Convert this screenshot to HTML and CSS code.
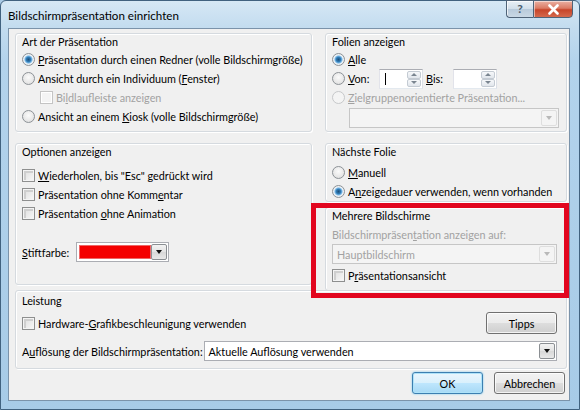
FILE: index.html
```html
<!DOCTYPE html>
<html lang="de">
<head>
<meta charset="utf-8">
<title>Bildschirmpräsentation einrichten</title>
<link rel="stylesheet" href="styles.css">
</head>
<body>
<div class="window">
  <div class="titlebar">
    <div class="title">Bildschirmpräsentation einrichten</div>
    <div class="caption">
      <div class="cbtn help">?</div>
      <div class="cbtn close"><svg width="13" height="11" viewBox="0 0 13 11"><path d="M2.5 1.5 L10.5 9.5 M10.5 1.5 L2.5 9.5" stroke="#fff" stroke-width="2.6" stroke-linecap="round"/></svg></div>
    </div>
  </div>
  <div class="client">
    <div class="cols">
      <div class="group g1">
        <div class="glabel">Art der Präsentation</div>
        <div class="row"><i class="radio on"></i><span><u>P</u>räsentation durch einen Redner (volle Bildschirmgröße)</span></div>
        <div class="row"><i class="radio"></i><span>Ansicht durch ein Individuum (<u>F</u>enster)</span></div>
        <div class="row sub dis"><i class="check"></i><span>Bi<u>l</u>dlaufleiste anzeigen</span></div>
        <div class="row"><i class="radio"></i><span>Ansicht an einem <u>K</u>iosk (volle Bildschirmgröße)</span></div>
      </div>
      <div class="group g2">
        <div class="glabel">Folien anzeigen</div>
        <div class="row"><i class="radio on"></i><span><u>A</u>lle</span></div>
        <div class="row von">
          <i class="radio"></i><span class="lbl-von"><u>V</u>on:</span>
          <div class="spin"><span class="caret"></span><div class="spinbtns"><b class="up"></b><b class="down"></b></div></div>
          <span class="lbl-bis"><u>B</u>is:</span>
          <div class="spin"><div class="spinbtns"><b class="up"></b><b class="down"></b></div></div>
        </div>
        <div class="row dis"><i class="radio"></i><span><u>Z</u>ielgruppenorientierte Präsentation...</span></div>
        <div class="combo dis ziel"><span class="val"></span><b class="abtn"><i class="tri"></i></b></div>
      </div>

      <div class="group g3">
        <div class="glabel">Optionen anzeigen</div>
        <div class="checks">
          <div class="row"><i class="check"></i><span><u>W</u>iederholen, bis "Esc" gedrückt wird</span></div>
          <div class="row"><i class="check"></i><span>Präsentation ohne Komm<u>e</u>ntar</span></div>
          <div class="row"><i class="check"></i><span>Präsentation <u>o</u>hne Animation</span></div>
        </div>
        <div class="row pen"><span><u>S</u>tiftfarbe:</span>
          <div class="combo color"><span class="swatch"></span><b class="abtn"><i class="tri"></i></b></div>
        </div>
      </div>
      <div class="rightcol">
        <div class="group g4">
          <div class="glabel">Nächste Folie</div>
          <div class="row"><i class="radio"></i><span><u>M</u>anuell</span></div>
          <div class="row"><i class="radio on"></i><span>A<u>n</u>zeigedauer verwenden, wenn vorhanden</span></div>
        </div>
        <div class="group g5">
          <div class="glabel">Mehrere Bildschirme</div>
          <div class="row dis plain">Bildschirmpräsen<u>t</u>ation anzeigen auf:</div>
          <div class="combo dis mon"><span class="val">Hauptbildschirm</span><b class="abtn"><i class="tri"></i></b></div>
          <div class="row"><i class="check"></i><span>P<u>r</u>äsentationsansicht</span></div>
        </div>
      </div>
    </div>

    <div class="group g6">
      <div class="glabel">Leistung</div>
      <div class="row hw"><i class="check"></i><span>Hardware-<u>G</u>rafikbeschleunigung verwenden</span><button class="btn tipps">Tipps</button></div>
      <div class="row res"><span>A<u>u</u>flösung der Bildschirmpräsentation:</span>
        <div class="combo resc"><span class="val">Aktuelle Auflösung verwenden</span><b class="abtn"><i class="tri"></i></b></div>
      </div>
    </div>

    <div class="buttons">
      <button class="btn def">OK</button>
      <button class="btn">Abbrechen</button>
    </div>

    <div class="annot"></div>
  </div>
</div>
</body>
</html>
```

FILE: styles.css
```css
* { box-sizing: border-box; }
html, body { margin: 0; padding: 0; }
body {
  width: 580px; height: 410px; overflow: hidden;
  font-family: "Lato", "Open Sans", sans-serif;
  font-size: 10.8px; color: #000;
  background: #aacbe6;
}
u { text-decoration: underline; text-underline-offset: 1px; }
i, b { display: block; font-style: normal; }

.window {
  width: 580px; height: 410px;
  border: 1px solid #41627f;
  border-radius: 6px 6px 0 0;
  background: linear-gradient(180deg, #d6e8f5 0, #c3dcef 26px, #b3d3ec 60px, #a7cbe7 100%);
  display: flex; flex-direction: column;
}
.titlebar {
  height: 27px; flex: none;
  display: flex; justify-content: space-between; align-items: flex-start;
  padding-left: 7px;
}
.title { line-height: 27px; font-size: 11.6px; color: #000; padding-top: 1px; }
.caption { display: flex; margin-right: 6px; margin-top: -1px; }
.cbtn {
  height: 18px; border: 1px solid #4f6378;
  display: flex; align-items: center; justify-content: center;
}
.help {
  width: 27px; border-right: none; border-radius: 0 0 0 4px;
  background: linear-gradient(180deg, #e9f0f6 0, #d2dfea 48%, #b8cadb 52%, #c9d8e5 100%);
  color: #4a5b6c; font-size: 12px; font-weight: bold; line-height: 1;
  box-shadow: inset 1px 1px 0 rgba(255,255,255,.7);
}
.close {
  width: 40px; border-radius: 0 0 4px 0;
  background: linear-gradient(180deg, #eab1a3 0, #db7b64 45%, #c7452a 55%, #d5694d 100%);
  box-shadow: inset 1px 1px 0 rgba(255,255,255,.5);
}

.client {
  flex: 1; margin: 0 9px 8px 7px;
  border: 1px solid #7b93aa;
  background: #f0f0f0;
  padding: 4px 2px 0 6px;
  display: flex; flex-direction: column;
  position: relative;
}
.cols {
  display: grid;
  grid-template-columns: 297px 242px;
  column-gap: 13px; row-gap: 11px;
}
.group {
  border: 1px solid #d5dadf;
  border-radius: 3px;
  box-shadow: inset 1px 1px 0 #fff, 1px 1px 0 #fff;
  padding: 1px 6px 0 6px;
}
.glabel { line-height: 14px; height: 14px; }
.row { display: flex; align-items: center; height: 19px; white-space: nowrap; }
.row > span { margin-left: 3px; }
.row.sub { padding-left: 18px; }
.dis { color: #a2a2a2; }

.radio {
  width: 13px; height: 13px; border-radius: 50%; flex: none;
  border: 1px solid #8d9297;
  background: radial-gradient(circle at 50% 40%, #fbfbfb 0, #e8e8e8 60%, #d4d4d4 100%);
}
.radio.on {
  background: radial-gradient(circle at 50% 50%, #1e4f7a 0, #2f79b2 28%, #76b6e6 45%, #eef3f7 58%, #e0e0e0 100%);
}
.dis .radio { border-color: #c6c8ca; background: #f4f4f4; }
.check {
  width: 13px; height: 13px; flex: none;
  border: 1px solid #8e8f8f;
  background: linear-gradient(135deg, #dcdcdc 0, #f8f8f8 100%);
  box-shadow: inset 0 0 0 1px #f4f4f4, inset 1px 1px 0 2px #cfcfcf;
}
.dis .check { border-color: #c4c4c4; background: #f4f4f4; box-shadow: inset 0 0 0 1px #fff; }

.g1, .g2 { height: 99px; }
.g1 .glabel, .g2 .glabel { margin-bottom: 1px; }

.von .lbl-von { width: 30px; }
.lbl-bis { margin-left: 7px; width: 26px; }
.spin {
  width: 44px; height: 20px; margin-left: 1px;
  border: 1px solid #abadb3; border-color: #abadb3 #dbdfe6 #e3e9ef #e2e3ea;
  background: #fff; display: flex; justify-content: space-between; align-items: center;
  padding: 1px;
}
.caret { width: 1px; height: 12px; background: #000; margin-left: 4px; }
.spinbtns { margin-left: auto; width: 14px; height: 16px; display: flex; flex-direction: column; }
.spinbtns b {
  flex: 1; border: 1px solid #c4cbd3; border-radius: 2px;
  background: linear-gradient(#f6f8fa, #e1e6ec);
  display: flex; align-items: center; justify-content: center;
}
.spinbtns b::after { content: ""; border: 3px solid transparent; }
.spinbtns .up::after { border-bottom-color: #7a8590; border-top-width: 0; }
.spinbtns .down::after { border-top-color: #7a8590; border-bottom-width: 0; }

.combo {
  height: 20px; border: 1px solid #abadb3; background: #fff;
  display: flex; align-items: center; padding: 1px;
}
.combo .val { flex: 1; padding-left: 3px; white-space: nowrap; }
.abtn {
  width: 16px; height: 16px; flex: none; margin-left: auto;
  border: 1px solid #8b8f93; border-radius: 2px;
  background: linear-gradient(#f3f3f3, #e3e3e3 50%, #d8d8d8 51%, #e8e8e8);
  display: flex; align-items: center; justify-content: center;
}
.tri { width: 0; height: 0; border: 3.5px solid transparent; border-top: 4px solid #111; border-bottom: 0; }
.combo.dis { background: #f4f4f4; border-color: #c6c6c6; color: #a2a2a2; }
.combo.dis .abtn { border-color: #dedede; background: #f4f4f4; }
.combo.dis .tri { border-top-color: #b9b9b9; }
.ziel { margin: 1px 0 0 17px; width: 210px; }

.g3 { height: 142px; }
.checks { margin-top: 7px; }
.pen { margin-top: 19px; height: 20px; }
.pen > span { margin-left: 0; width: 54px; }
.color { width: 93px; }
.swatch { width: 74px; height: 14px; background: #f40000; border: 1px solid #e66; margin-left: 1px; }

.rightcol { display: flex; flex-direction: column; height: 142px; }
.g4 { height: 59px; flex: none; }
.g4 .glabel { margin-bottom: 4px; }
.g5 { margin-top: 5px; height: 84px; flex: none; }
.row.plain { height: 19px; margin-top: 2px; }
.mon { margin: 0 3px 2px 0; }

.g6 { margin-top: 5px; height: 79px; padding: 3px 9px 0 6px; }
.g6 .glabel { margin-bottom: 4px; }
.hw { height: 22px; }
.btn {
  font-family: inherit; font-size: 10.8px; color: #000;
  height: 22px; padding: 0;
  border: 1px solid #707070; border-radius: 3px;
  background: linear-gradient(#f2f2f2 0, #ebebeb 50%, #dddddd 51%, #cfcfcf 100%);
  box-shadow: inset 0 0 0 1px rgba(255,255,255,.75);
}
.tipps { margin-left: auto; width: 71px; }
.res { margin-top: 7px; height: 20px; }
.res > span { margin-left: 0; }
.resc { margin-left: 1px; flex: 1; }

.buttons { margin-top: auto; margin-bottom: 6px; display: flex; justify-content: flex-end; gap: 11px; padding-right: 2px; }
.buttons .btn { width: 71px; }
.btn.def {
  border-color: #3c7fb1;
  background: linear-gradient(#eaf6fd 0, #d9f0fc 50%, #bee6fd 51%, #a7d9f5 100%);
  box-shadow: inset 0 0 0 1px #aee3f9, 0 0 2px #67c5f0;
}

.annot {
  position: absolute; left: 302px; top: 174px; width: 258px; height: 95px;
  border: 5px solid #e2061f;
  pointer-events: none;
}
```
